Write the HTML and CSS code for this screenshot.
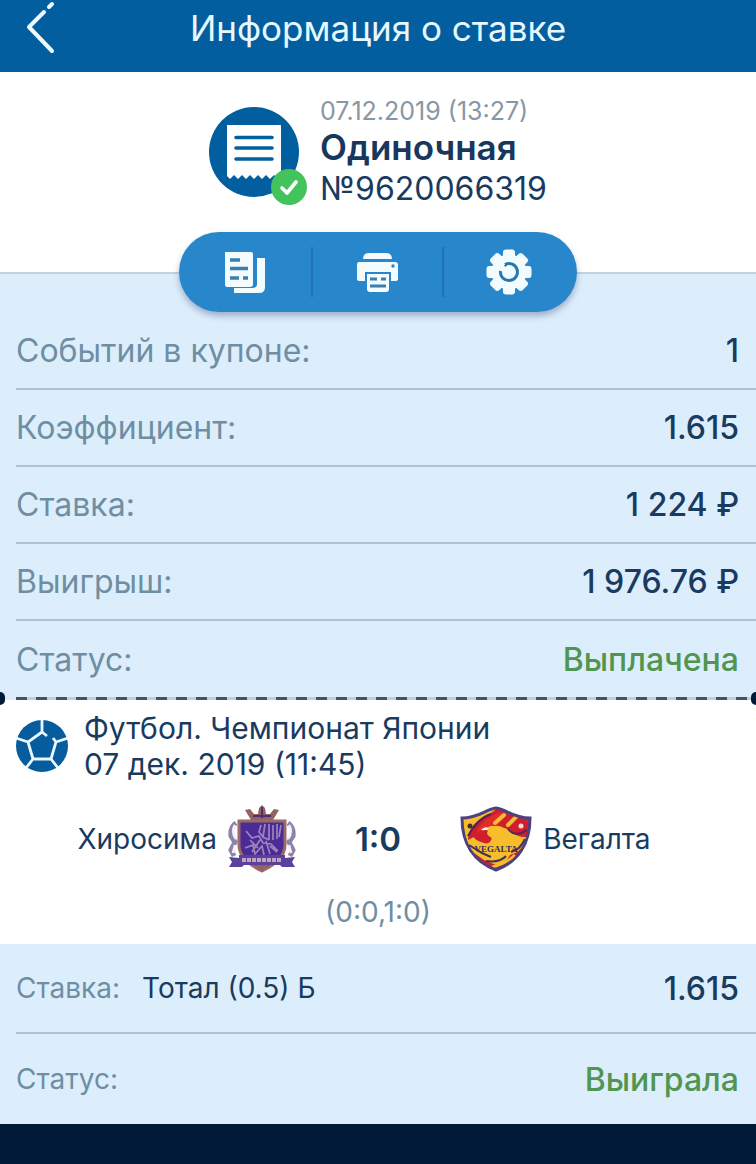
FILE: index.html
```
<!DOCTYPE html>
<html lang="ru">
<head>
<meta charset="utf-8">
<meta name="viewport" content="width=device-width, initial-scale=1">
<title>Информация о ставке</title>
<link rel="stylesheet" href="styles.css">
</head>
<body>
<header class="topbar">
  <button class="back" type="button" aria-label="Назад">
    <svg width="32" height="56" viewBox="0 0 32 56" fill="none" stroke="#f0fbff" stroke-width="4" stroke-linecap="round"><path d="M28 4l-3 3M20 12L5 27l23 24" stroke-linejoin="round"/></svg>
  </button>
  <h1 class="title">Информация о ставке</h1>
</header>
<main>
  <section class="ticket">
    <div class="ticket-info">
      <svg class="ticket-icon" width="99" height="100" viewBox="0 0 99 100">
        <circle cx="45" cy="45" r="45" fill="#025f9f"/>
        <path d="M18 18H72V69l-3 3-4-4-4 4-4-4-4 4-4-4-4 4-4-4-4 4-4-4-4 4-4-4-4 4-3-3z" fill="#fff"/>
        <path d="M27 30.500H63M27 41H63M27 52H63" stroke="#025f9f" stroke-width="3.600" stroke-linecap="round"/>
        <circle cx="80" cy="80" r="18" fill="#43c35c"/>
        <path d="M73 81l5 5 9-11" fill="none" stroke="#fff" stroke-width="3.600" stroke-linecap="round" stroke-linejoin="round"/>
      </svg>
      <div class="ticket-text">
        <time class="ticket-date">07.12.2019 (13:27)</time>
        <strong class="ticket-type">Одиночная</strong>
        <span class="ticket-number">№9620066319</span>
      </div>
    </div>
    <div class="actions">
      <button class="action" type="button" aria-label="Копировать">
        <svg width="44" height="44" viewBox="0 0 44 44"><path d="M34 8h8v29q0 6-6 6H11v-5h18q5 0 5-4z" fill="#f2fcff"/><path d="M2 2H28Q30 2 30 4V34Q30 37 27 37H4Q2 37 2 35z" fill="#f2fcff"/><path d="M7 10H17M7 18.500H25M7 28H16M20 28H25" stroke="#3d7fac" stroke-width="3.400"/></svg>
      </button>
      <button class="action" type="button" aria-label="Печать">
        <svg width="44" height="44" viewBox="0 0 44 44"><path d="M8 9q0-6 6-6H31q6 0 6 6zM4 12H40q3 0 3 3V29q0 2-2 2H36V22H10v9H4q-2 0-2-2V15q0-3 2-3z" fill="#f2fcff"/><path d="M12 24H34V39Q34 42 31 42H15Q12 42 12 39z" fill="#f2fcff"/><path d="M15 29H22M26 29H31M15 36H31" stroke="#3d7fac" stroke-width="3"/><circle cx="38" cy="16" r="1.700" fill="#2886cb"/></svg>
      </button>
      <button class="action" type="button" aria-label="Настройки">
        <svg width="46" height="46" viewBox="-23 -23 46 46"><g fill="#f2fcff"><circle r="17.500"/><g id="teeth"><rect x="-6" y="-22.500" width="12" height="45" rx="3"/><rect x="-22.500" y="-6" width="45" height="12" rx="3"/></g><use href="#teeth" transform="rotate(45)"/></g><path d="M-4-7.500A8.500 8.500 0 1 1-8.500-1M-4-7.500l1.500 1.500" fill="none" stroke="#2778b0" stroke-width="3"/></svg>
      </button>
    </div>
  </section>
  <dl class="summary">
    <div class="row"><dt>Событий в купоне:</dt><dd>1</dd></div>
    <div class="row"><dt>Коэффициент:</dt><dd>1.615</dd></div>
    <div class="row"><dt>Ставка:</dt><dd>1 224 ₽</dd></div>
    <div class="row"><dt>Выигрыш:</dt><dd>1 976.76 ₽</dd></div>
    <div class="row"><dt>Статус:</dt><dd class="won">Выплачена</dd></div>
  </dl>
  <div class="tear"></div>
  <section class="match">
    <div class="league">
      <svg width="52" height="52" viewBox="0 0 52 52"><circle cx="26" cy="26" r="26" fill="#075c9d"/><path d="M26 0V12M26 12L12 22 17 39H35L40 22 37 18M26 12l5 4M40 22L52 18M35 39L42 48M17 39L10 48M12 22L0 18" fill="none" stroke="#e9f8ff" stroke-width="2.800"/></svg>
      <h2 class="league-text">Футбол. Чемпионат Японии<br>07 дек. 2019 (11:45)</h2>
    </div>
    <div class="teams">
      <div class="team home">
        <span>Хиросима</span>
        <svg width="68" height="68" viewBox="0 0 68 68">
          <path d="M23 15L17 5l5-1 4 5 4 0 1-6 3-3 3 3 1 6 4 0 4-5 5 1-6 10z" fill="#94635f"/><path d="M34 2v11M25 11h18" stroke="#4d2f73" stroke-width="2"/>
          <path d="M8 18q-6 4-5 13l4 6-4 8 3 6M60 18q6 4 5 13l-4 6 4 8-3 6" fill="none" stroke="#8c83ab" stroke-width="5"/><path d="M7 20q-4 7 1 14M61 20q4 7-1 14M7 40l-2 8M61 40l2 8" stroke="#f4f0f6" stroke-width="2.600" fill="none"/>
          <path d="M11 16H57V40Q57 55 34 66 11 55 11 40z" fill="#4b2c97" stroke="#9a6b68" stroke-width="3"/>
          <path d="M18 26l6 7 7-2 4 7 8 1 7 7M17 43l8-3 2 9 7-8 2 9M33 20l-2 7 5 6M37 19l-2 13 6 3M41 19v16M45 20v15M49 19v15M53 20l-2 12M22 35l8 8M42 41l7 6M24 47l8-12M38 36l4 13" fill="none" stroke="#9f83bd" stroke-width="1.700"/>
          <path d="M1 52l10 1V50H57v3l10-1-3 5 3 5H54l-2-2H16l-2 2H1l3-5z" fill="#5b419c"/><path d="M14 55H54" stroke="#c4a5c1" stroke-width="4" stroke-dasharray="4 1"/><path d="M27 60H41l-7 6z" fill="#94635f"/>
        </svg>
      </div>
      <strong class="score">1:0</strong>
      <div class="team">
        <svg width="72" height="66" viewBox="0 0 72 66">
          <defs><clipPath id="shield"><path d="M36 2C26 3 19 12 2 12 2 38 14 56 36 64 58 56 70 38 70 12 53 12 46 3 36 2z"/></clipPath></defs>
          <g clip-path="url(#shield)">
            <path d="M0 0H72V66H0z" fill="#f7bd2b"/>
            <path d="M8 34C9 20 17 14 28 9L38 2H72V30Q60 33 53 27 46 20 36 22L29 24Q24 28 32 32 30 39 24 37 14 34 14 31z" fill="#cf1f2c"/>
            <path d="M30 11Q41 4 47 9L38 19q-7-1-12 3-6 2-10 6 3-11 14-17z" fill="#e02c2a"/>
            <path d="M34 20q-5-1-8 4l5 2q-2 7 5 10H60V32q-9 0-14-8-5-5-12-4z" fill="#f7bd2b"/>
            <path d="M8 30Q18 12 31 8M67 24Q55 32 48 23" fill="none" stroke="#4c285b" stroke-width="2"/>
            <path d="M35 17L44 9M48 19L57 10" stroke="#f4bd35" stroke-width="4" stroke-linecap="round"/>
            <path d="M14 47l10 7 12 5q10-2 14-10 10-2 16-14v15L37 66 18 58z" fill="#cf1f2c"/>
            <path d="M26 55q14 2 20-5M9 39l13 8 9 4M65 33Q60 44 51 46" fill="none" stroke="#48315c" stroke-width="2"/>
            <path d="M32 61q14-3 23-12" fill="none" stroke="#f7bd2b" stroke-width="3"/>
            <path d="M21 24q3-4 8-2-2 3-8 2z" fill="#fff3df"/>
            <circle cx="10" cy="20" r="2.500" fill="#3b3040"/><circle cx="61" cy="20" r="2.500" fill="#ffd5d2"/>
          </g>
          <path d="M36 2C26 3 19 12 2 12 2 38 14 56 36 64 58 56 70 38 70 12 53 12 46 3 36 2z" fill="none" stroke="#4b427f" stroke-width="3"/>
          <text class="crest-name" x="36" y="46" text-anchor="middle">VEGALTA</text>
        </svg>
        <span>Вегалта</span>
      </div>
    </div>
    <p class="periods">(0:0,1:0)</p>
  </section>
  <dl class="bet">
    <div class="row"><dt>Ставка:</dt><dd class="pick">Тотал (0.5) Б</dd><dd>1.615</dd></div>
    <div class="row"><dt>Статус:</dt><dd class="won">Выиграла</dd></div>
  </dl>
</main>
</body>
</html>
```
FILE: styles.css
```
* { box-sizing: border-box; }
body {
  margin: 0;
  min-height: 100vh;
  background: #001a38;
  color: #193b5f;
  font-family: Inter, "Noto Sans", sans-serif;
}
h1, h2, p, dl, dd { margin: 0; }
button { border: 0; padding: 0; background: none; cursor: pointer; }
svg { display: block; flex: none; }
.topbar {
  display: grid;
  grid-template-columns: 48px 1fr 48px;
  height: 72px;
  padding: 0 24px 16px;
  align-items: center;
  background: #025e9e;
}
.title {
  color: #e6f8ff;
  font-size: 35px;
  font-weight: 400;
  line-height: 40px;
  text-align: center;
}
.ticket { padding-top: 25px; background: #fff; }
.ticket-info { display: flex; justify-content: center; gap: 12px; }
.ticket-icon { margin-top: 10px; }
.ticket-text { display: flex; flex-direction: column; }
.ticket-date { color: #8797a5; font-size: 25px; line-height: 28px; }
.ticket-type { color: #17375c; font-size: 35px; font-weight: 600; line-height: 44px; }
.ticket-number { font-size: 32px; line-height: 39px; }
.actions {
  position: relative;
  display: grid;
  grid-template-columns: repeat(3, 1fr);
  width: 398px;
  height: 80px;
  margin: 24px auto -40px;
  padding-right: 3px;
  align-items: center;
  border-radius: 40px;
  background: #2886cb;
  box-shadow: 0 4px 6px rgba(40, 60, 110, .35);
}
.action { display: grid; height: 50px; place-items: center; }
.action + .action { border-left: 2px solid #2370b2; }
.summary {
  padding: 39px 0 0 16px;
  border-top: 2px solid #c5d2dc;
  background: #dceefb;
}
.row {
  display: flex;
  min-height: 77px;
  padding-right: 17px;
  align-items: center;
  border-bottom: 2px solid #b0c2d0;
  font-size: 32px;
}
.row:last-child { min-height: 76px; border-bottom: 0; }
.row dt { color: #6f8ea3; }
.row dd:last-child { margin-left: auto; font-weight: 500; }
.row .won { color: #529550; }
.tear {
  position: relative;
  height: 3px;
  background: repeating-linear-gradient(90deg, #405467 0 11px, #c3cdd6 11px 20px) 16px 0 / 100% 100% no-repeat #dceefb;
}
.tear::before, .tear::after {
  position: absolute;
  top: -5px;
  width: 5px;
  height: 13px;
  background: #001a38;
  content: "";
}
.tear::before { left: 0; border-radius: 0 5px 5px 0; }
.tear::after { right: 0; border-radius: 5px 0 0 5px; }
.match { padding: 10px 16px 14px; background: #fff; }
.league { display: flex; gap: 16px; align-items: center; }
.league-text { font-size: 30px; font-weight: 400; line-height: 36px; }
.teams {
  display: grid;
  grid-template-columns: 1fr auto 1fr;
  gap: 59px;
  margin-top: 23px;
  align-items: center;
}
.team { display: flex; gap: 11px; align-items: center; font-size: 28px; }
.home { justify-content: flex-end; }
.score { font-size: 33px; font-weight: 600; }
.crest-name { fill: #33305f; font: bold 9px "Liberation Serif", serif; }
.periods { margin-top: 21px; color: #6f8ea3; font-size: 28px; line-height: 36px; text-align: center; }
.bet { padding-left: 16px; background: #dceefb; }
.bet .row { min-height: 90px; }
.bet dt, .bet .pick { font-size: 28px; }
.bet .pick { margin-left: 22px; }
```
